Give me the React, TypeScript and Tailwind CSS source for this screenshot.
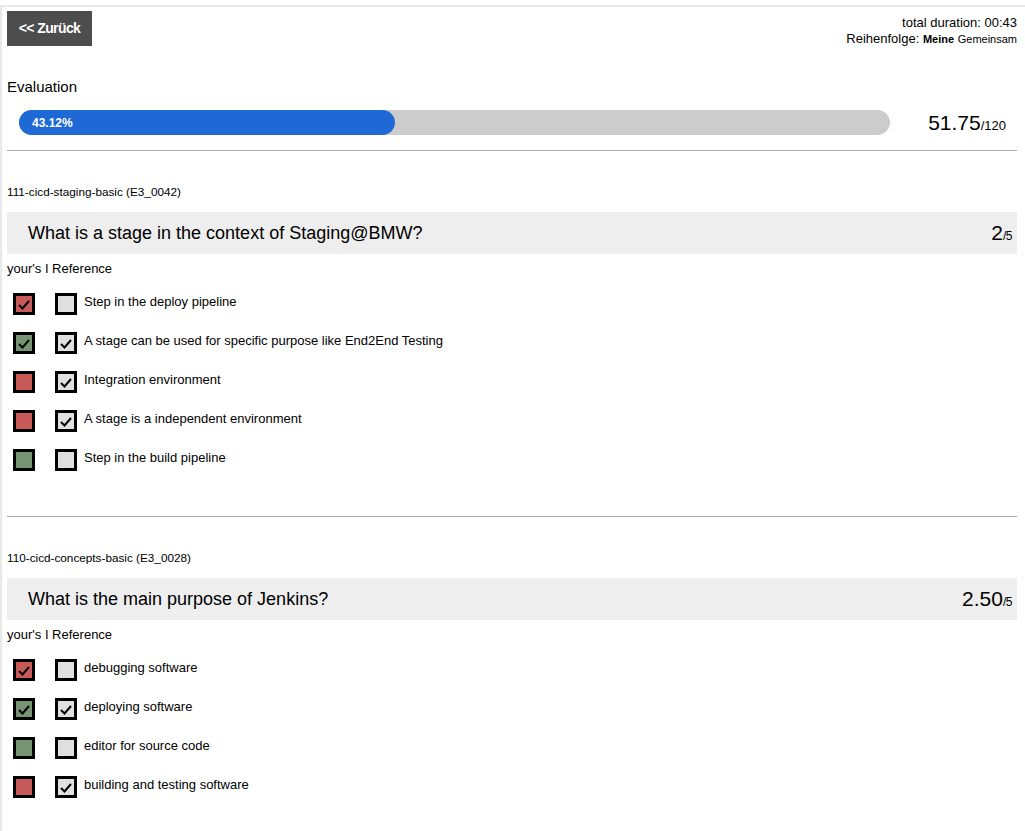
import React from 'react';

type Answer = {
  text: string;
  yours: 'red' | 'green';
  checked: boolean;
  reference: boolean;
};

type Question = {
  id: string;
  title: string;
  score: string;
  max: string;
  answers: Answer[];
};

const questions: Question[] = [
  {
    id: '111-cicd-staging-basic (E3_0042)',
    title: 'What is a stage in the context of Staging@BMW?',
    score: '2',
    max: '/5',
    answers: [
      { text: 'Step in the deploy pipeline', yours: 'red', checked: true, reference: false },
      { text: 'A stage can be used for specific purpose like End2End Testing', yours: 'green', checked: true, reference: true },
      { text: 'Integration environment', yours: 'red', checked: false, reference: true },
      { text: 'A stage is a independent environment', yours: 'red', checked: false, reference: true },
      { text: 'Step in the build pipeline', yours: 'green', checked: false, reference: false },
    ],
  },
  {
    id: '110-cicd-concepts-basic (E3_0028)',
    title: 'What is the main purpose of Jenkins?',
    score: '2.50',
    max: '/5',
    answers: [
      { text: 'debugging software', yours: 'red', checked: true, reference: false },
      { text: 'deploying software', yours: 'green', checked: true, reference: true },
      { text: 'editor for source code', yours: 'green', checked: false, reference: false },
      { text: 'building and testing software', yours: 'red', checked: false, reference: true },
    ],
  },
];

const Tick = () => (
  <svg width="16" height="16" viewBox="0 0 16 16" className="block">
    <polyline points="3,9 6.5,12.5 13,5" fill="none" stroke="#000" strokeWidth="2" />
  </svg>
);

const Box = ({ color, checked }: { color: string; checked: boolean }) => (
  <div className={`w-[22px] h-[22px] border-[3px] border-black flex items-center justify-center shrink-0 ${color}`}>
    {checked ? <Tick /> : null}
  </div>
);

const Section = ({ q }: { q: Question }) => {
  return (
    <div>
      <p className="mt-[34px] text-[11.75px] leading-[14px]">{q.id}</p>
      <div className="mt-[13px] h-[42px] bg-[#eeeeee] flex items-center justify-between pl-[21px] pr-[5px]">
        <p className="text-[18px]">{q.title}</p>
        <p className="flex items-baseline">
          <span className="text-[21px]">{q.score}</span>
          <span className="text-[12px] tracking-[-0.5px]">{q.max}</span>
        </p>
      </div>
      <p className="mt-[8px] text-[13px] leading-[14px]">your's I Reference</p>
      <div className="mt-[17px] flex flex-col gap-[17px] pl-[6px]">
        {q.answers.map((a) => (
          <div key={a.text} className="flex items-start h-[22px]">
            <Box color={a.yours === 'red' ? 'bg-[#c85a5a]' : 'bg-[#779472]'} checked={a.checked} />
            <div className="ml-[20px]">
              <Box color="bg-[#e0e0e0]" checked={a.reference} />
            </div>
            <p className="ml-[7px] text-[13px] leading-[18px]">{a.text}</p>
          </div>
        ))}
      </div>
      <div className="mt-[45px] border-t border-[#aaaaaa]" />
    </div>
  );
};

export default function App() {
  return (
    <div className="bg-white min-h-screen pt-[5px] text-black" style={{ fontFamily: '"Liberation Sans", Arial, sans-serif' }}>
      <div className="border-t-2 border-l-2 border-[#e8e8e8] pl-[5px] pr-[8px] pt-[4px] min-h-[826px]">
        <div className="flex justify-between">
          <button className="w-[85px] h-[35px] bg-[#4d4d4d] text-white text-[14px] font-bold tracking-[-0.6px]">
            &lt;&lt; Zurück
          </button>
          <div className="text-right text-[13px] leading-[16px] pt-[4px]">
            <p>total duration: 00:43</p>
            <p>
              Reihenfolge: <span className="font-bold text-[11px]">Meine</span>{' '}
              <span className="text-[11px]">Gemeinsam</span>
            </p>
          </div>
        </div>
        <p className="mt-[31px] text-[15px] leading-[18px]">Evaluation</p>
        <div className="mt-[14px] h-[25px] flex items-center pl-[12px] pr-[11px]">
          <div className="w-[871px] h-[25px] rounded-full bg-[#cccccc]">
            <div className="h-full rounded-full bg-[#1e69d6] flex items-center pl-[13px]" style={{ width: '43.12%' }}>
              <span className="text-white text-[12px] font-bold leading-none">43.12%</span>
            </div>
          </div>
          <p className="ml-auto flex items-baseline leading-none">
            <span className="text-[21px]">51.75</span>
            <span className="text-[13px]">/120</span>
          </p>
        </div>
        <div className="mt-[15px] border-t border-[#aaaaaa]" />
        {questions.map((q) => (
          <Section key={q.id} q={q} />
        ))}
      </div>
    </div>
  );
}
